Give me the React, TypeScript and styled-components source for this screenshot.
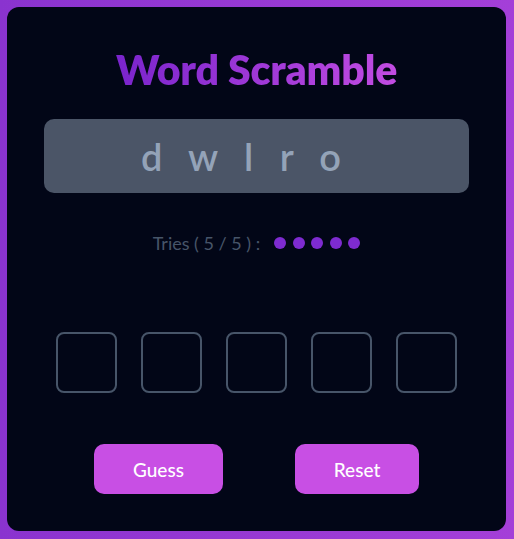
import styled, { createGlobalStyle } from "styled-components";

const GlobalStyle = createGlobalStyle`
  * { box-sizing: border-box; }
  html, body { margin: 0; padding: 0; height: 100%; }
  body {
    background: linear-gradient(90deg, #8a33cf 0%, #a43fd8 100%);
    font-family: "Lato", "Inter", "Noto Sans", sans-serif;
  }
  #root { height: 100%; }
`;

const Page = styled.div`
  height: 100%;
  padding: 7px 8px 8px 7px;
`;

const Card = styled.main`
  height: 100%;
  background: #020617;
  border-radius: 12px;
  display: flex;
  flex-direction: column;
  align-items: center;
  padding: 41px 36px 0;
`;

const Title = styled.h1`
  margin: 0;
  font-size: 41px;
  font-weight: 800;
  line-height: 44px;
  letter-spacing: -0.2px;
  background: linear-gradient(90deg, #7a24cc 0%, #c24ce2 100%);
  -webkit-background-clip: text;
  background-clip: text;
  color: transparent;
`;

const Scrambled = styled.div`
  margin-top: 27px;
  width: 425px;
  height: 74px;
  background: #4b5567;
  border-radius: 10px;
  display: flex;
  align-items: center;
  justify-content: center;
  padding-right: 24px;
  font-size: 38px;
  font-weight: 600;
  color: #94a3b8;
  letter-spacing: 7px;
  word-spacing: 3px;
`;

const TriesRow = styled.div`
  margin-top: 39px;
  display: flex;
  align-items: center;
  gap: 14px;
  color: #475569;
  font-size: 18px;
`;

const Dots = styled.div`
  display: flex;
  gap: 6.5px;
`;

const Dot = styled.span<{ $used?: boolean }>`
  width: 12px;
  height: 12px;
  border-radius: 50%;
  background: ${(p) => (p.$used ? "#334155" : "#7e2bd0")};
`;

const Inputs = styled.div`
  margin-top: 78px;
  display: flex;
  gap: 24px;
`;

const LetterBox = styled.input`
  width: 61px;
  height: 61px;
  border: 2px solid #475569;
  border-radius: 8px;
  background: transparent;
  color: #e2e8f0;
  font-size: 28px;
  text-align: center;
  outline: none;
`;

const Actions = styled.div`
  margin-top: 51px;
  display: flex;
  gap: 72px;
`;

const Button = styled.button<{ $w: number }>`
  width: ${(p) => p.$w}px;
  height: 50px;
  border: none;
  border-radius: 10px;
  background: #c84fe4;
  color: #ffffff;
  font-family: inherit;
  font-size: 19px;
  font-weight: 500;
  cursor: pointer;
`;

export default function App() {
  const letters = ["d", "w", "l", "r", "o"];
  return (
    <>
      <GlobalStyle />
      <Page>
        <Card>
          <Title>Word Scramble</Title>
          <Scrambled>{letters.join(" ")}</Scrambled>
          <TriesRow>
            <span>Tries ( 5 / 5 ) :</span>
            <Dots>
              {[0, 1, 2, 3, 4].map((i) => (
                <Dot key={i} />
              ))}
            </Dots>
          </TriesRow>
          <Inputs>
            {letters.map((_, i) => (
              <LetterBox key={i} maxLength={1} />
            ))}
          </Inputs>
          <Actions>
            <Button $w={129}>Guess</Button>
            <Button $w={124}>Reset</Button>
          </Actions>
        </Card>
      </Page>
    </>
  );
}
